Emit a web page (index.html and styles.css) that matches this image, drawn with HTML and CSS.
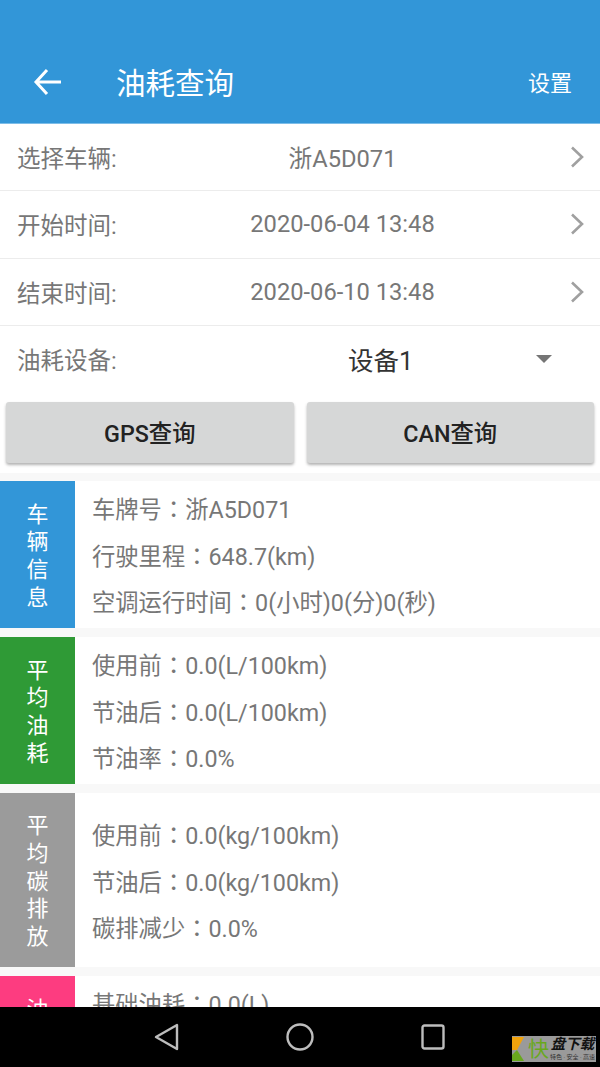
FILE: index.html
```html
<!DOCTYPE html>
<html lang="en">
  <head>
    <meta charset="UTF-8" />
    <meta name="viewport" content="width=device-width, initial-scale=1" />
    <title>油耗查询</title>
    <link rel="stylesheet" href="styles.css">
  </head>
  <body>
    <div class="screen">
      <div class="content">
        <!-- Title bar -->
        <header class="appbar">
          <svg class="back" width="30" height="28" viewBox="0 0 30 28">
            <path d="M14 2 L3 14 L14 26 M3 14 H28" fill="none" stroke="#fff" stroke-width="3" />
          </svg>
          <h1>油耗查询</h1>
          <span class="settings">设置</span>
        </header>

        <!-- Query form -->
        <div class="form-row">
          <span class="form-label">选择车辆:</span>
          <span class="form-value">浙A5D071</span>
          <svg class="chevron" width="14" height="22" viewBox="0 0 14 22">
            <path d="M2 1.5 L12 11 L2 20.5" fill="none" stroke="#a0a0a0" stroke-width="2.6" />
          </svg>
        </div>
        <div class="form-row">
          <span class="form-label">开始时间:</span>
          <span class="form-value">2020-06-04 13:48</span>
          <svg class="chevron" width="14" height="22" viewBox="0 0 14 22">
            <path d="M2 1.5 L12 11 L2 20.5" fill="none" stroke="#a0a0a0" stroke-width="2.6" />
          </svg>
        </div>
        <div class="form-row">
          <span class="form-label">结束时间:</span>
          <span class="form-value">2020-06-10 13:48</span>
          <svg class="chevron" width="14" height="22" viewBox="0 0 14 22">
            <path d="M2 1.5 L12 11 L2 20.5" fill="none" stroke="#a0a0a0" stroke-width="2.6" />
          </svg>
        </div>
        <div class="form-row device-row">
          <span class="form-label">油耗设备:</span>
          <span class="device-value">设备1</span>
          <span class="caret"></span>
        </div>

        <div class="button-row">
          <button>GPS查询</button>
          <button>CAN查询</button>
        </div>

        <!-- Result cards -->
        <div class="cards">
          <section class="card">
            <div class="tag tag-blue"><span>车</span><span>辆</span><span>信</span><span>息</span></div>
            <div class="lines">
              <p>车牌号<span class="colon">：</span>浙A5D071</p>
              <p>行驶里程<span class="colon">：</span>648.7(km)</p>
              <p>空调运行时间<span class="colon">：</span>0(小时)0(分)0(秒)</p>
            </div>
          </section>
          <section class="card">
            <div class="tag tag-green"><span>平</span><span>均</span><span>油</span><span>耗</span></div>
            <div class="lines">
              <p>使用前<span class="colon">：</span>0.0(L/100km)</p>
              <p>节油后<span class="colon">：</span>0.0(L/100km)</p>
              <p>节油率<span class="colon">：</span>0.0%</p>
            </div>
          </section>
          <section class="card card-tall">
            <div class="tag tag-grey"><span>平</span><span>均</span><span>碳</span><span>排</span><span>放</span></div>
            <div class="lines">
              <p>使用前<span class="colon">：</span>0.0(kg/100km)</p>
              <p>节油后<span class="colon">：</span>0.0(kg/100km)</p>
              <p>碳排减少<span class="colon">：</span>0.0%</p>
            </div>
          </section>
          <section class="card">
            <div class="tag tag-pink"><span>油</span></div>
            <div class="lines">
              <p>基础油耗<span class="colon">：</span>0.0(L)</p>
            </div>
          </section>
        </div>
      </div>

      <!-- Android nav bar -->
      <nav class="navbar">
        <svg width="28" height="30" viewBox="0 0 28 30">
          <path d="M26 3 V27 L5 15 Z" fill="none" stroke="#bdbdbd" stroke-width="2.4" stroke-linejoin="round" />
        </svg>
        <svg width="28" height="28" viewBox="0 0 28 28">
          <circle cx="14" cy="14" r="12.5" fill="none" stroke="#bdbdbd" stroke-width="2.4" />
        </svg>
        <svg width="24" height="26" viewBox="0 0 24 26">
          <rect x="1.5" y="1.5" width="21" height="23" rx="2" fill="none" stroke="#bdbdbd" stroke-width="2.4" />
        </svg>
      </nav>

      <!-- Download site watermark -->
      <div class="watermark">
        <svg width="12" height="24" viewBox="0 0 12 24">
          <path d="M0 0 H12 L5 13 L0 13 Z" fill="#f0a20c" />
          <path d="M0 18 L5 13 L12 24 H0 Z" fill="#69a81e" />
        </svg>
        <span class="wm-kuai">快</span>
        <div class="wm-text">
          <span class="wm-name">盘下载</span>
          <span class="wm-sub">特色 · 安全 · 高速</span>
        </div>
      </div>
    </div>
  </body>
</html>
```

FILE: styles.css
```css
html,
body {
  margin: 0;
  padding: 0;
}

body {
  font-family: Roboto, "Noto Sans CJK SC", sans-serif;
  background-color: #fff;
  color: #777;
}

.screen {
  position: relative;
  width: 600px;
  height: 1067px;
  display: flex;
  flex-direction: column;
  overflow: hidden;
}

.content {
  flex: 1;
  min-height: 0;
  overflow: hidden;
}

.appbar {
  height: 124px;
  box-sizing: border-box;
  padding: 41px 28px 0 33px;
  background-color: #3296d8;
  color: #fff;
  display: flex;
  align-items: center;
  border-bottom: 1px solid #7dbde8;
}

.appbar .back {
  flex: none;
}

.appbar h1 {
  margin: 0 0 3px 53px;
  font-size: 29.5px;
  font-weight: 400;
  flex: 1;
}

.settings {
  margin-bottom: 3px;
  font-size: 22px;
}

.form-row {
  height: 67.33px;
  box-sizing: border-box;
  padding: 0 16px 0 17px;
  border-bottom: 1px solid #ececec;
  display: flex;
  align-items: center;
  font-size: 23.5px;
}

.form-label {
  width: 100px;
  flex: none;
  white-space: nowrap;
}

.form-value {
  flex: 1;
  text-align: center;
  white-space: nowrap;
  font-size: 23.7px;
  padding-right: 2px;
}

.chevron {
  flex: none;
}

.device-row {
  height: 68px;
  padding-bottom: 2px;
  border-bottom: none;
}

.device-value {
  flex: 1;
  padding-left: 231px;
  font-size: 25.5px;
  color: #333;
}

.caret {
  width: 0;
  height: 0;
  margin-right: 32px;
  border-left: 8px solid transparent;
  border-right: 8px solid transparent;
  border-top: 8px solid #757575;
}

.button-row {
  display: flex;
  gap: 13px;
  padding: 8px 6px 10px;
}

.button-row button {
  flex: 1;
  height: 61px;
  border: none;
  border-radius: 3px;
  background-color: #d6d7d7;
  color: #222;
  font-family: inherit;
  font-size: 23.3px;
  font-weight: 500;
  box-shadow: 0 2px 3px rgba(0, 0, 0, 0.3);
}

.cards {
  background-color: #f8f8f8;
  padding-top: 8px;
  display: flex;
  flex-direction: column;
  gap: 9px;
}

.card {
  height: 147px;
  flex: none;
  display: flex;
  background-color: #fff;
}

.card-tall {
  height: 174px;
}

.tag {
  width: 75px;
  box-sizing: border-box;
  padding-top: 3px;
  flex: none;
  display: flex;
  flex-direction: column;
  align-items: center;
  justify-content: center;
  color: #fff;
  font-size: 22px;
  line-height: 27.7px;
}

.tag-blue {
  background-color: #3296d8;
}

.tag-green {
  background-color: #2f9a36;
}

.tag-grey {
  background-color: #9b9b9b;
}

.tag-pink {
  background-color: #fd3c80;
  justify-content: flex-start;
  padding-top: 20px;
}

.lines {
  flex: 1;
  padding: 6px 0 0 17px;
  font-size: 23.3px;
  line-height: 46.7px;
}

.card-tall .lines {
  padding-top: 20px;
}

.lines p {
  margin: 0;
  white-space: nowrap;
}

/* centred full-width colon, as the phone's font draws it */
.colon {
  font-family: "Noto Sans CJK TC", sans-serif;
  line-height: 0;
}

.navbar {
  height: 60px;
  flex: none;
  background-color: #000;
  display: flex;
  align-items: center;
  justify-content: center;
  gap: 107px;
  padding-right: 4px;
}

.watermark {
  position: absolute;
  left: 512px;
  top: 1036px;
  width: 84px;
  height: 26px;
  box-sizing: border-box;
  background-color: #9a9a9a;
  display: flex;
  align-items: center;
  overflow: hidden;
}

.wm-kuai {
  margin-left: 4px;
  font-size: 21px;
  line-height: 26px;
  color: #69a81e;
}

.wm-text {
  margin-left: 1px;
  display: flex;
  flex-direction: column;
  align-items: center;
}

.wm-name {
  font-size: 14.5px;
  line-height: 16px;
  font-weight: 700;
  font-style: italic;
  color: #111;
}

.wm-sub {
  font-size: 6px;
  line-height: 8px;
  color: #333;
  white-space: nowrap;
}
```
